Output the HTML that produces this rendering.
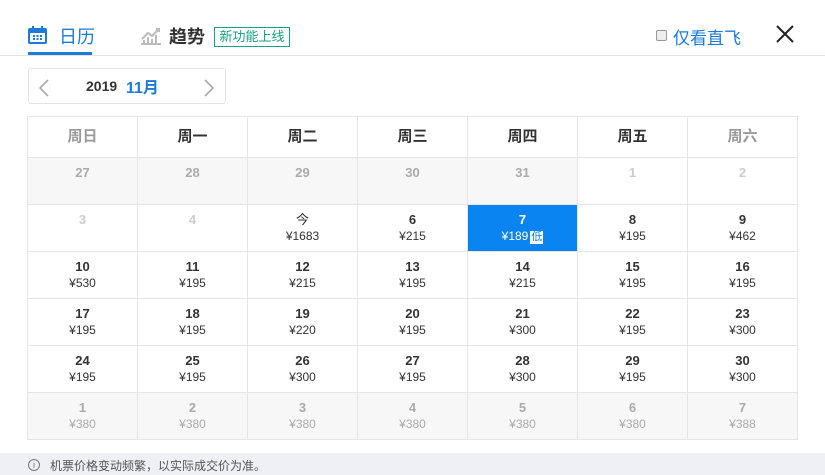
<!DOCTYPE html>
<html><head><meta charset="utf-8"><style>
*{margin:0;padding:0;box-sizing:border-box}
body{width:825px;height:475px;background:#fff;font-family:"Liberation Sans","Noto Sans CJK SC",sans-serif;position:relative;overflow:hidden;color:#333}
.a{position:absolute}
table{position:absolute;left:27px;top:116px;border-collapse:collapse}
td{width:110px;height:47px;border:1px solid #e6e6e6;text-align:center;vertical-align:top;padding-top:7px;line-height:16px}
tr.h td{height:41px;vertical-align:middle;padding:0;font-size:15px;font-weight:bold;color:#333}
tr.h td.w{color:#999}
td b{display:block;font-size:13px;color:#333}
td i{display:block;font-style:normal;font-size:12px;color:#333}
td.g{background:#f7f7f7}
td.g b{color:#aaa}td.g i{color:#aaa}
td.l b{color:#ccc}
td.s{background:#0a84f0}td.s b,td.s i{color:#fff}
.low{display:inline-block;background:#fff;color:#0a84f0;font-size:11px;line-height:13px;padding:0 1px;margin-left:2px}
</style></head><body>
<svg class="a" style="left:28px;top:26px" width="19" height="18" viewBox="0 0 19 18"><rect x="1" y="3" width="17" height="14" rx="1" fill="none" stroke="#1a7bd8" stroke-width="2"/><rect x="1" y="3" width="17" height="4" fill="#1a7bd8"/><rect x="4" y="0" width="2" height="4" fill="#1a7bd8"/><rect x="13" y="0" width="2" height="4" fill="#1a7bd8"/><g fill="#1a7bd8"><rect x="5" y="9" width="2" height="2"/><rect x="8.5" y="9" width="2" height="2"/><rect x="12" y="9" width="2" height="2"/><rect x="5" y="12" width="2" height="2"/><rect x="8.5" y="12" width="2" height="2"/><rect x="12" y="12" width="2" height="2"/></g></svg>
<div class="a" style="left:59px;top:23px;font-size:18px;color:#1a7bd8">日历</div>
<div class="a" style="left:28px;top:52px;width:64px;height:3px;background:#1a7bd8"></div>
<div class="a" style="left:0;top:55px;width:825px;height:1px;background:#e3e3e3"></div>
<svg class="a" style="left:141px;top:27px" width="20" height="18" viewBox="0 0 20 18"><path d="M1 12 L7 6 L11 9 L18 2" fill="none" stroke="#bbb" stroke-width="2"/><path d="M15 2 H18 V5" fill="none" stroke="#bbb" stroke-width="2"/><g fill="#bbb"><rect x="2" y="13" width="2" height="4"/><rect x="6" y="10" width="2" height="7"/><rect x="10" y="12" width="2" height="5"/><rect x="14" y="8" width="2" height="9"/><rect x="0" y="16" width="20" height="2"/></g></svg>
<div class="a" style="left:169px;top:23px;font-size:18px;font-weight:bold;color:#333">趋势</div>
<div class="a" style="left:214px;top:27px;width:76px;height:20px;border:1px solid #16a085;color:#16a085;font-size:13px;line-height:18px;text-align:center">新功能上线</div>
<div class="a" style="left:656px;top:30px;width:11px;height:11px;border:1px solid #999;border-radius:2px;background:#eee"></div>
<div class="a" style="left:673px;top:24px;font-size:17px;color:#1a7bd8">仅看直飞</div>
<svg class="a" style="left:775px;top:24px" width="20" height="20"><path d="M2 2L18 18M18 2L2 18" stroke="#222" stroke-width="2"/></svg>
<div class="a" style="left:28px;top:68px;width:198px;height:36px;border:1px solid #e3e3e3;border-radius:3px"></div>
<svg class="a" style="left:38px;top:79px" width="12" height="18"><path d="M10 1L2 9L10 17" fill="none" stroke="#aaa" stroke-width="1.6"/></svg>
<svg class="a" style="left:203px;top:79px" width="12" height="18"><path d="M2 1L10 9L2 17" fill="none" stroke="#aaa" stroke-width="1.6"/></svg>
<div class="a" style="left:86px;top:78px;font-size:14px;font-weight:bold;color:#333">2019</div>
<div class="a" style="left:126px;top:74px;font-size:16px;font-weight:bold;color:#1a7bd8">11月</div>
<table>
<tr class="h"><td class="w">周日</td><td>周一</td><td>周二</td><td>周三</td><td>周四</td><td>周五</td><td class="w">周六</td></tr>
<tr><td class="g"><b>27</b></td><td class="g"><b>28</b></td><td class="g"><b>29</b></td><td class="g"><b>30</b></td><td class="g"><b>31</b></td><td class="l"><b>1</b></td><td class="l"><b>2</b></td></tr>
<tr><td class="l"><b>3</b></td><td class="l"><b>4</b></td><td><b style="font-weight:normal">今</b><i>¥1683</i></td><td><b>6</b><i>¥215</i></td><td class="s"><b>7</b><i>¥189<span class="low">低</span></i></td><td><b>8</b><i>¥195</i></td><td><b>9</b><i>¥462</i></td></tr>
<tr><td><b>10</b><i>¥530</i></td><td><b>11</b><i>¥195</i></td><td><b>12</b><i>¥215</i></td><td><b>13</b><i>¥195</i></td><td><b>14</b><i>¥215</i></td><td><b>15</b><i>¥195</i></td><td><b>16</b><i>¥195</i></td></tr>
<tr><td><b>17</b><i>¥195</i></td><td><b>18</b><i>¥195</i></td><td><b>19</b><i>¥220</i></td><td><b>20</b><i>¥195</i></td><td><b>21</b><i>¥300</i></td><td><b>22</b><i>¥195</i></td><td><b>23</b><i>¥300</i></td></tr>
<tr><td><b>24</b><i>¥195</i></td><td><b>25</b><i>¥195</i></td><td><b>26</b><i>¥300</i></td><td><b>27</b><i>¥195</i></td><td><b>28</b><i>¥300</i></td><td><b>29</b><i>¥195</i></td><td><b>30</b><i>¥300</i></td></tr>
<tr><td class="g"><b>1</b><i>¥380</i></td><td class="g"><b>2</b><i>¥380</i></td><td class="g"><b>3</b><i>¥380</i></td><td class="g"><b>4</b><i>¥380</i></td><td class="g"><b>5</b><i>¥380</i></td><td class="g"><b>6</b><i>¥380</i></td><td class="g"><b>7</b><i>¥388</i></td></tr>
</table>
<div class="a" style="left:0;top:453px;width:825px;height:22px;background:#eef0f5"></div>
<div class="a" style="left:28px;top:459px;width:12px;height:12px;border:1px solid #777;border-radius:50%;font-size:9px;line-height:10px;text-align:center;color:#777">i</div>
<div class="a" style="left:50px;top:457px;font-size:12px;color:#555">机票价格变动频繁，以实际成交价为准。</div>
</body></html>
